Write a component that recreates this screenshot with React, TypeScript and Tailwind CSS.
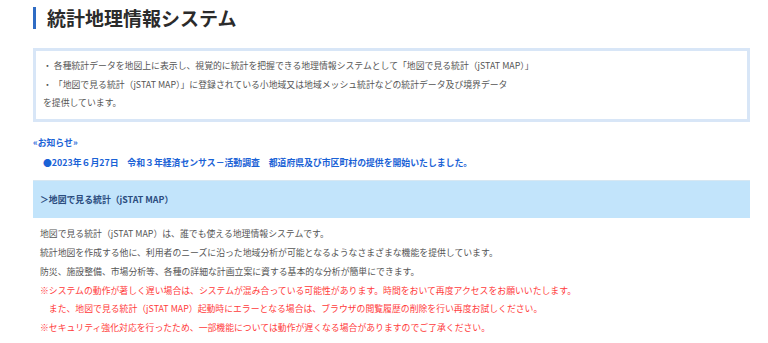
const intro = [
  "・ 各種統計データを地図上に表示し、視覚的に統計を把握できる地理情報システムとして「地図で見る統計（jSTAT MAP）」",
  "・ 「地図で見る統計（jSTAT MAP）」に登録されている小地域又は地域メッシュ統計などの統計データ及び境界データ",
  "を提供しています。",
];

const body = [
  { text: "地図で見る統計（jSTAT MAP）は、誰でも使える地理情報システムです。", red: false },
  { text: "統計地図を作成する他に、利用者のニーズに沿った地域分析が可能となるようなさまざまな機能を提供しています。", red: false },
  { text: "防災、施設整備、市場分析等、各種の詳細な計画立案に資する基本的な分析が簡単にできます。", red: false },
  { text: "※システムの動作が著しく遅い場合は、システムが混み合っている可能性があります。時間をおいて再度アクセスをお願いいたします。", red: true },
  { text: "　また、地図で見る統計（jSTAT MAP）起動時にエラーとなる場合は、ブラウザの閲覧履歴の削除を行い再度お試しください。", red: true },
  { text: "※セキュリティ強化対応を行ったため、一部機能については動作が遅くなる場合がありますのでご了承ください。", red: true },
];

export default function App() {
  return (
    <div
      className="w-[768px] h-[343px] bg-white overflow-hidden"
      style={{ fontFamily: '"Noto Sans CJK JP", "Noto Sans", sans-serif' }}
    >
      <div className="ml-[33px] w-[717px] pt-[7px]">
        {/* Title */}
        <h1 className="border-l-[3px] border-[#2f6cc4] pl-[11px] text-[19px] leading-[22px] font-bold text-[#2b2b2b]">
          統計地理情報システム
        </h1>

        {/* Intro box */}
        <div className="mt-[19px] border-[3px] border-[#d8e6f7] px-[7px] py-[6px] text-[8.85px] leading-[18.7px] text-[#555]">
          {intro.map((line) => (
            <p key={line}>{line}</p>
          ))}
        </div>

        {/* Notices */}
        <div className="mt-[11px] text-[8.85px] leading-[20px] font-bold text-[#1a62d6]">
          <p>«お知らせ»</p>
          <p className="pl-[10px]">
            ●2023年６月27日　令和３年経済センサス－活動調査　都道府県及び市区町村の提供を開始いたしました。
          </p>
        </div>

        {/* Section header */}
        <div className="mt-[7px] h-[38px] flex items-center bg-[#c2e4fb] border-t border-[#d7e7f2] px-[7px] text-[8.85px] font-bold text-[#2b4c7e]">
          ＞地図で見る統計（jSTAT MAP）
        </div>

        {/* Body */}
        <div className="mt-[7px] px-[7px] text-[8.85px] leading-[18.8px]">
          {body.map((l) => (
            <p key={l.text} className={l.red ? "text-[#ff3b3b]" : "text-[#555]"}>
              {l.text}
            </p>
          ))}
        </div>
      </div>
    </div>
  );
}
